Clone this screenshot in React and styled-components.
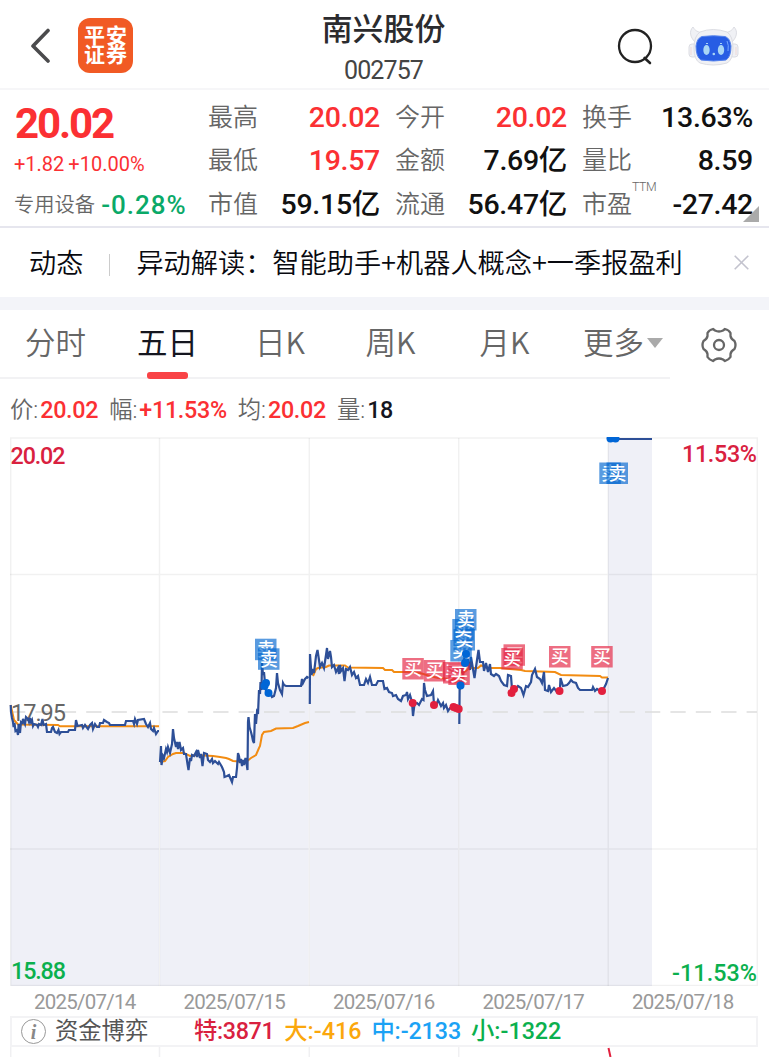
import styled, { createGlobalStyle } from 'styled-components';

const GlobalStyle = createGlobalStyle`
    * { box-sizing: border-box; }
    body {
        margin: 0;
        background: #fff;
        color: #15161f;
        font-family: Roboto, "Noto Sans CJK SC", sans-serif;
        line-height: 1.2;
        overflow: hidden;
    }
`;

const RED = '#fb3033';
const GREEN = '#0aa968';
const GRAY = '#666';

const Page = styled.div`
    width: 769px;
    height: 1057px;
    overflow: hidden;
    background: #fff;
`;

const Header = styled.header`
    display: flex;
    align-items: center;
    height: 90px;
    padding: 0 30px;
    border-bottom: 2px solid #f6f6f8;
`;

const HeaderSide = styled.div`
    flex: 1;
    display: flex;
    align-items: center;
    justify-content: ${p => p.$end ? 'flex-end' : 'flex-start'};
    gap: ${p => p.$end ? '35px' : '27px'};
    padding-top: 3px;
`;

const Logo = styled.div`
    display: grid;
    grid-template-columns: 22px 22px;
    grid-template-rows: 19px 19px;
    place-content: center;
    place-items: center;
    width: 55px;
    height: 55px;
    border-radius: 12px;
    background: #f15a24;
    color: #fff;
    font-size: 21px;
    font-weight: 700;
    line-height: 19px;
    padding-top: 1px;
`;

const Heading = styled.div`
    text-align: center;
    color: #2b2b2e;
    padding: 6px 2px 0 0;
`;

const StockName = styled.div`
    font-size: 30.9px;
    font-weight: 500;
    line-height: 40px;
    margin-top: 3px;
`;

const StockCode = styled.div`
    font-size: 25px;
    line-height: 34px;
    letter-spacing: -0.9px;
    color: #444;
    margin-top: 4px;
`;

const Quote = styled.section`
    display: flex;
    height: 138px;
    border-bottom: 2px solid #e6e6ee;
    padding: 5px 0 0 14px;
    position: relative;
`;

const PriceBlock = styled.div`
    width: 194px;
`;

const Price = styled.div`
    font-size: 42px;
    font-weight: 700;
    letter-spacing: -2.1px;
    line-height: 57px;
    padding-left: 1px;
    color: ${RED};
`;

const Change = styled.div`
    font-size: 20px;
    line-height: 24px;
    word-spacing: -1px;
    color: ${RED};
    margin-bottom: 11px;
`;

const Sector = styled.div`
    display: flex;
    align-items: center;
    gap: 6px;
    font-size: 20.3px;
    font-weight: 350;
    line-height: 36px;
    color: ${GRAY};
`;

const SectorChange = styled.span`
    font-size: 26px;
    font-weight: 500;
    letter-spacing: 1px;
    color: ${GREEN};
`;

const Stats = styled.div`
    display: grid;
    grid-template-columns: 172px 172px 171px;
    grid-template-rows: repeat(3, 43.5px);
    column-gap: 15px;
    padding-top: 1px;
`;

const Stat = styled.div`
    display: flex;
    align-items: center;
    justify-content: space-between;
`;

const StatLabel = styled.span`
    position: relative;
    font-size: 25px;
    font-weight: 350;
    color: ${GRAY};
`;

const Ttm = styled.sup`
    position: absolute;
    left: 50px;
    top: -11px;
    font-size: 12.3px;
    letter-spacing: -0.4px;
    line-height: 16px;
`;

const StatValue = styled.span`
    font-size: 28.5px;
    font-weight: 500;
    letter-spacing: -0.3px;
    line-height: 34px;
    white-space: nowrap;
    color: ${p => p.$up ? RED : '#111'};
`;

const Corner = styled.div`
    position: absolute;
    right: 10px;
    bottom: 4px;
    border-left: 16px solid transparent;
    border-bottom: 16px solid #aaa;
`;

const News = styled.section`
    display: flex;
    align-items: center;
    height: 69px;
    padding: 0 20px 4px 29px;
    font-size: 27.2px;
    font-weight: 350;
    line-height: 40px;
    white-space: nowrap;
    font-family: "Noto Sans CJK SC", sans-serif;
    color: #08090f;
`;

const Divider = styled.i`
    width: 1px;
    height: 22px;
    margin: 8px 26px 0;
    background: #ccc;
`;

const NewsText = styled.span`
    flex: 1;
`;

const CloseIcon = styled.svg`
    margin-top: 4px;
`;

const Band = styled.div`
    height: 13px;
    background: #f3f4f9;
`;

const TabBar = styled.nav`
    display: flex;
    height: 69px;
`;

const Tabs = styled.div`
    display: flex;
    width: 670px;
    padding-left: 25px;
    border-bottom: 2px solid #f2f2f4;
`;

const Tab = styled.div`
    display: flex;
    align-items: center;
    flex-direction: column;
    margin-right: ${p => p.$gap}px;
    padding-top: 9px;
    font-family: "Noto Sans CJK SC", sans-serif;
    font-size: 30.5px;
    font-weight: ${p => p.$active ? 400 : 350};
    line-height: 44px;
    white-space: nowrap;
    color: ${p => p.$active ? '#15161f' : GRAY};

    &::after {
        content: '';
        display: ${p => p.$active ? 'block' : 'none'};
        width: 41px;
        height: 7px;
        margin-top: 9px;
        border-radius: 3px;
        background: #f94346;
        flex-shrink: 0;
    }
`;

const More = styled.span`
    display: flex;
    align-items: center;
    gap: 3px;
`;

const Settings = styled.div`
    display: flex;
    align-items: center;
    padding-left: 31px;
`;

const Legend = styled.div`
    display: flex;
    align-items: center;
    gap: 11px;
    height: 58px;
    padding: 5px 10px 0;
    font-size: 23.3px;
    font-weight: 350;
    color: ${GRAY};
`;

const LegendValue = styled.span`
    margin-left: 2px;
    font-weight: 500;
    letter-spacing: -0.3px;
    color: ${p => p.$dark ? '#15161f' : RED};
`;

const ChartSvg = styled.svg`
    display: block;
    font-family: Roboto, "Noto Sans CJK SC", sans-serif;
`;

const Dates = styled.div`
    display: grid;
    grid-template-columns: repeat(5, 149.5px);
    height: 30px;
    padding-left: 10px;
    font-size: 20.5px;
    line-height: 32px;
    letter-spacing: -0.75px;
    text-align: center;
    color: #999;
`;

const Flow = styled.div`
    display: flex;
    align-items: center;
    height: 31px;
    width: 748px;
    margin-left: 10px;
    padding: 0 0 0 9px;
    border: 2px solid #f3f3f5;
    font-size: 23.3px;
    color: #555;
    white-space: nowrap;
`;

const FlowName = styled.span`
    width: 139px;
    margin-left: 9px;
    padding-top: 1px;
`;

const FlowItem = styled.span`
    font-weight: 500;
    margin-right: 10px;
    padding-top: 1px;
    letter-spacing: ${p => p.$ls}px;
    color: ${p => p.$color};
`;

const Info = styled.i`
    display: flex;
    align-items: center;
    justify-content: center;
    width: 25px;
    height: 25px;
    border: 1.5px solid #999;
    border-radius: 50%;
    font: italic 700 20px/22px "Liberation Serif", serif;
    color: #888;
`;

const stats = [
    ['最高', '20.02', true], ['今开', '20.02', true], ['换手', '13.63%'],
    ['最低', '19.57', true], ['金额', '7.69亿'], ['量比', '8.59'],
    ['市值', '59.15亿'], ['流通', '56.47亿'], ['市盈', '-27.42'],
];

const tabs = [['分时', 51], ['五日', 57], ['日K', 60.5], ['周K', 64], ['月K', 53.5]];

const legend = [['价', '20.02'], ['幅', '+11.53%'], ['均', '20.02'], ['量', '18']];

const dates = ['2025/07/14', '2025/07/15', '2025/07/16', '2025/07/17', '2025/07/18'];

// one polyline per trading day
const priceLines = [
    '10.7,705 11,712 12,718 13,722 13.6,727 14.5,723 15.5,731 17,730 18,735 18.6,724 20,733 21,722 22.5,723 23,719 25,724 26,717 28,719 29,722 30,718 31,722 32,720 33,726 34,724 37,725 38,727 39,724 41,725 42.5,719 43.5,725 46,724 47,732 51,732 52,728 53,727 55,732 57,733 58.5,730 59.5,734 61,732 68,732 69,730 75,730 75.6,724 76,720 77.5,726 82,725 83,728 85,725 88,729 90,725 92,723 93,729 95,724 97,727 99,727 100,723 103,723 104,720 107,722 109,723 110,725 125,725 126,721 133,721 134,724 135,719 137,724 138,720 144,719 146,724 148,727 150,723 151,729 153,731 154,728 156,734 158,731 159,731',
    '160,762 161,746 161.5,765 163,756 164,758 166,749 167,752 168,747 170,753 172,744 173,729 174,738 176,747 177,742 178,749 179.5,742 181,750 183,748 184,754 186,754 187.5,764 188.5,770 190,758 191,761 192,755 194,756 196,752 197,757 198,750 200,758 201,754 202.5,766 204,753 207,754 208,760 210,762 212,759 213,763 215,761 218,764 219,762 222,767 224,772 224.5,777 227,776 229,775 232,782 233,777 236,777 237,768 238,753 239,756 240,763 241,759 242,766 243,760 244,765 245.5,758 246.5,763 247.5,770 248,722 248.5,717 249.5,727 251,732 252,736 253,741 254,743 255,714 256,724 257,712 258,714 259,690 260,694 260.5,682 261.5,690 262,662 263,675 264,672 265,683 266,691 268,693 270,692 272,697 274,696 276,688 277,673 278,683 280,690 282,694 283,683 284,685 286,686 301,686 302,679 303,683 305,679 307,677 308.5,678',
    '309.8,704 310,654 311.5,675 313,669 314,673 316,656 317.5,650 319,660 320,667 322,663 324,668 326,655 327,648 328,659 330,651 331,657 332,667 334,665 336,672 338,668 339,674 340,665 341,671 343,668 344.5,681 346,669 348,670 350,667 352,675 354,672 356,678 358,676 360,685 364,685 366,679 368,683 370,677 372,685 376,685 378,681 383,681 384.5,689 387,688 389,692 392,693 393,696 396,695 398,699 401,701 403,696 406,695 407,692 408,699 410,695 412,702 413,716 414.5,704 417,703 419,705 422,699 423.5,700 424,683 425,690 427,696 431,695 433,691 434,704 436,706 438,700 440,704 441,706 443,703 444,708 446,705 448,711 450,708 452,707 456,709 458.5,709',
    '459.3,724 459.7,685 460.5,680 463,663 465,656 467,655 470,670 471,657 474.5,678 477,660 478.5,650 480,662 483,662 484,671 486,663 488,672 490,664 491,674 494,676 496,674 499,676 501,681 504,685 507,686 508,675 511,676 512,689 515,690 518,686 521,688 523.5,695 526,686 528,687 531,682 532,675 535,669 537,677 540,679 542,683 544,672 545,690 548,691 549,685 551,692 554,688 557,692 560,688 560.5,678 563,686 567,685 569,683 571,680 573,682 576,683 578,688 580,690 592,690 593,687 595,691 597,689 600,691 603,690 605,686 606,684 608,678',
    '608,439 652,439',
];

const averageLines = [
    '10.7,705 14,720 18,724.5 58,725 60,726.3 159,726.3',
    '160,762 165,761 168,757 173,754 176,753 184,753 190,756 195,755 213,756 220,757 226,758 229,759 233,761 246,762 251,758 256,755 259,748 260,746 262,735 264,732 271,731 276,728.5 293,728 298,726 305,723 309,722',
    '313,676 316,669 318,668 326,667 329,665.5 345,665.5 348,667.5 383,668 385,670 392,670 394,672 408,672 420,673 430,676 438,678 450,679 458,679',
    '460,690 463,673 467,670 469,668 478,668 481,665.5 488,668 500,668 510,669 521,670 525,671 555,672 561,675 600,676 602,677.5 608,677.5',
];

const sellDots = [[266, 683], [264.5, 686], [268.5, 693], [460.5, 685.5], [465, 663], [466, 654], [610.5, 438.5], [615.5, 438.5]];
const buyDots = [[412.7, 703], [434, 705], [453.5, 707], [456, 708], [458.7, 709], [511.5, 693], [514, 689], [559.5, 691], [602, 691]];

const sellTags = [[255, 638.7], [258, 648.3], [450.3, 640], [453.5, 629], [452.3, 619], [455, 609], [599.3, 462.5], [606.5, 462.5]];
const buyTags = [[402.3, 658], [423.8, 660], [443, 662], [448.3, 663.5], [503.5, 644.3], [501.3, 648], [549, 646], [591.2, 646]];

function Tag({ x, y, color, text }) {
    return (
        <g>
            <rect x={x} y={y} width="21.5" height="21.5" fill={color} opacity="0.65" />
            <text x={x + 10.8} y={y + 17.3} fontSize="17.8" fontWeight="500" textAnchor="middle" fill="#fff">{text}</text>
        </g>
    );
}

function Chart() {
    return (
        <ChartSvg width="769" height="549" viewBox="0 437 769 549">
            {priceLines.map((points, i) => {
                const first = points.split(' ')[0].split(',')[0];
                const last = points.split(' ').pop().split(',')[0];
                return <polygon key={i} points={`${first},986 ${points} ${last},986`} fill="#eff0f7" />;
            })}
            <g stroke="#000" strokeOpacity="0.055" strokeWidth="1.5" fill="none">
                <rect x="10.7" y="438" width="746.6" height="547.5" />
                <path d="M159.5 438V986M309.3 438V986M458.7 438V986M608.2 438V986M10 574.5H757M10 849H757" />
            </g>
            <path d="M10 712H757" stroke="#ddd" strokeWidth="1.6" strokeDasharray="15.3 10.1" />
            <text x="11" y="721" fontSize="23.5" fill="#666" textLength="55">17.95</text>
            <g fill="none" strokeLinejoin="miter">
                {averageLines.map((points, i) => <polyline key={i} points={points} stroke="#f28c12" strokeWidth="2" />)}
                {priceLines.map((points, i) => <polyline key={i} points={points} stroke="#2d4f97" strokeWidth="2.2" />)}
            </g>
            {sellTags.map(([x, y], i) => <Tag key={i} x={x} y={y} color="#0066cf" text="卖" />)}
            {buyTags.map(([x, y], i) => <Tag key={i} x={x} y={y} color="#e4213f" text="买" />)}
            {sellDots.map(([x, y], i) => <circle key={i} cx={x} cy={y} r="4" fill="#0066d6" />)}
            {buyDots.map(([x, y], i) => <circle key={i} cx={x} cy={y} r="4" fill="#e2203e" />)}
            <g fontSize="23.3" fontWeight="500" fill="#d9213f">
                <text x="10.5" y="464" textLength="55">20.02</text>
                <text x="682" y="462" textLength="75">11.53%</text>
            </g>
            <g fontSize="23.3" fontWeight="500" fill="#0bb04e">
                <text x="11" y="979" textLength="55">15.88</text>
                <text x="672" y="981" textLength="85">-11.53%</text>
            </g>
        </ChartSvg>
    );
}

function Robot() {
    return (
        <svg width="51" height="40" viewBox="0 0 51 40">
            <g fill="#f0f1f5" stroke="#dcdde3" strokeWidth="1">
                <path d="M7 16C2 11 1 5 5 1C7 5 10 6 15 7zM44 16C49 11 50 5 46 1C44 5 41 6 36 7z" />
                <rect x="1" y="18" width="8" height="13" rx="3" />
                <rect x="42" y="18" width="8" height="13" rx="3" />
                <path d="M12 6Q25 1 39 6Q45 10 45 22Q45 34 39 37Q25 41 12 37Q6 34 6 22Q6 10 12 6z" />
            </g>
            <path d="M3 21V29M48 21V29" stroke="#efd9d7" />
            <path d="M14 10.5Q25.5 9 37 10.5Q42 12 43 20Q43 31 38 34Q25.5 36 13 34Q8 31 8 20Q9 12 14 10.5z" fill="#275de4" stroke="#5885ec" />
            <path d="M39 15Q41 19 40 25" stroke="#75a8ff" fill="none" />
            <ellipse cx="18.5" cy="24" rx="3.2" ry="5" fill="#a8d5f5" />
            <ellipse cx="33" cy="24" rx="3.2" ry="5" fill="#a8d5f5" />
            <circle cx="25.8" cy="28" r="1.3" fill="#a8d5f5" />
            <path d="M18 17.5h2M32 17.5h2" stroke="#a8d5f5" />
        </svg>
    );
}

function App() {
    return (
        <Page>
            <GlobalStyle />
            <Header>
                <HeaderSide>
                    <svg width="21" height="36" viewBox="0 0 21 36">
                        <path d="M18 2.5L3 18L18 33" fill="none" stroke="#4b4b4d" strokeWidth="3.6" strokeLinecap="round" strokeLinejoin="round" />
                    </svg>
                    <Logo><span>平</span><span>安</span><span>证</span><span>券</span></Logo>
                </HeaderSide>
                <Heading>
                    <StockName>南兴股份</StockName>
                    <StockCode>002757</StockCode>
                </Heading>
                <HeaderSide $end>
                    <svg width="36" height="38" viewBox="0 -1 36 38">
                        <circle cx="18" cy="18" r="16" fill="none" stroke="#222" strokeWidth="2.3" />
                        <path d="M27.5 30L33 35" stroke="#222" strokeWidth="2.6" strokeLinecap="round" />
                    </svg>
                    <Robot />
                </HeaderSide>
            </Header>

            <Quote>
                <PriceBlock>
                    <Price>20.02</Price>
                    <Change>+1.82 +10.00%</Change>
                    <Sector>专用设备<SectorChange>-0.28%</SectorChange></Sector>
                </PriceBlock>
                <Stats>
                    {stats.map(([label, value, up]) => (
                        <Stat key={label}>
                            <StatLabel>{label}{label === '市盈' && <Ttm>TTM</Ttm>}</StatLabel>
                            <StatValue $up={up}>{value}</StatValue>
                        </Stat>
                    ))}
                </Stats>
                <Corner />
            </Quote>

            <News>
                动态
                <Divider />
                <NewsText>异动解读：智能助手+机器人概念+一季报盈利</NewsText>
                <CloseIcon width="15" height="15" viewBox="0 0 15 15">
                    <path d="M0.7 0.7L14.3 14.3M14.3 0.7L0.7 14.3" stroke="#c3c3ce" strokeWidth="1.6" />
                </CloseIcon>
            </News>
            <Band />

            <TabBar>
                <Tabs>
                    {tabs.map(([name, gap]) => (
                        <Tab key={name} $gap={gap} $active={name === '五日'}>{name}</Tab>
                    ))}
                    <Tab $gap={0}>
                        <More>
                            更多
                            <svg width="16" height="13" viewBox="0 -3 16 13"><path d="M0 0H16L8 10z" fill="#aaa" /></svg>
                        </More>
                    </Tab>
                </Tabs>
                <Settings>
                    <svg width="36" height="36" viewBox="0 0 36 36" fill="none" stroke="#666" strokeWidth="2.3" strokeLinejoin="round">
                        <path d="M12 2L14 3.5Q18 5.5 22 3.5L24 2Q28 3 29.5 6V9Q30 12 33.5 14Q35.5 18 33.5 22Q30 24 29.5 27V30Q28 32.5 24 34L22 32.5Q18 30.5 14 32.5L12 34Q8 32.5 6.5 30V27Q6 24 2.5 22Q0.5 18 2.5 14Q6 12 6.5 9V6Q8 3 12 2z" />
                        <circle cx="18" cy="18" r="5" />
                    </svg>
                </Settings>
            </TabBar>

            <Legend>
                {legend.map(([name, value]) => (
                    <span key={name}>{name}:<LegendValue $dark={name === '量'}>{value}</LegendValue></span>
                ))}
            </Legend>

            <Chart />

            <Dates>
                {dates.map(d => <span key={d}>{d}</span>)}
            </Dates>
            <Flow>
                <Info>i</Info>
                <FlowName>资金博弈</FlowName>
                <FlowItem $color="#d9213f" $ls={-0.35}>特:3871</FlowItem>
                <FlowItem $color="#fba70c" $ls={0}>大:-416</FlowItem>
                <FlowItem $color="#1ba2f5" $ls={-0.1}>中:-2133</FlowItem>
                <FlowItem $color="#0bb04e" $ls={0}>小:-1322</FlowItem>
            </Flow>
            <svg width="769" height="10" viewBox="0 0 769 10" display="block">
                <path d="M10.7 0V10M159.5 0V10M309.3 0V10M458.7 0V10" stroke="#f0f0f2" strokeWidth="1.5" />
                <path d="M608.5 1L610.5 10" stroke="#e2203e" strokeWidth="2" />
            </svg>
        </Page>
    );
}

export default App;
